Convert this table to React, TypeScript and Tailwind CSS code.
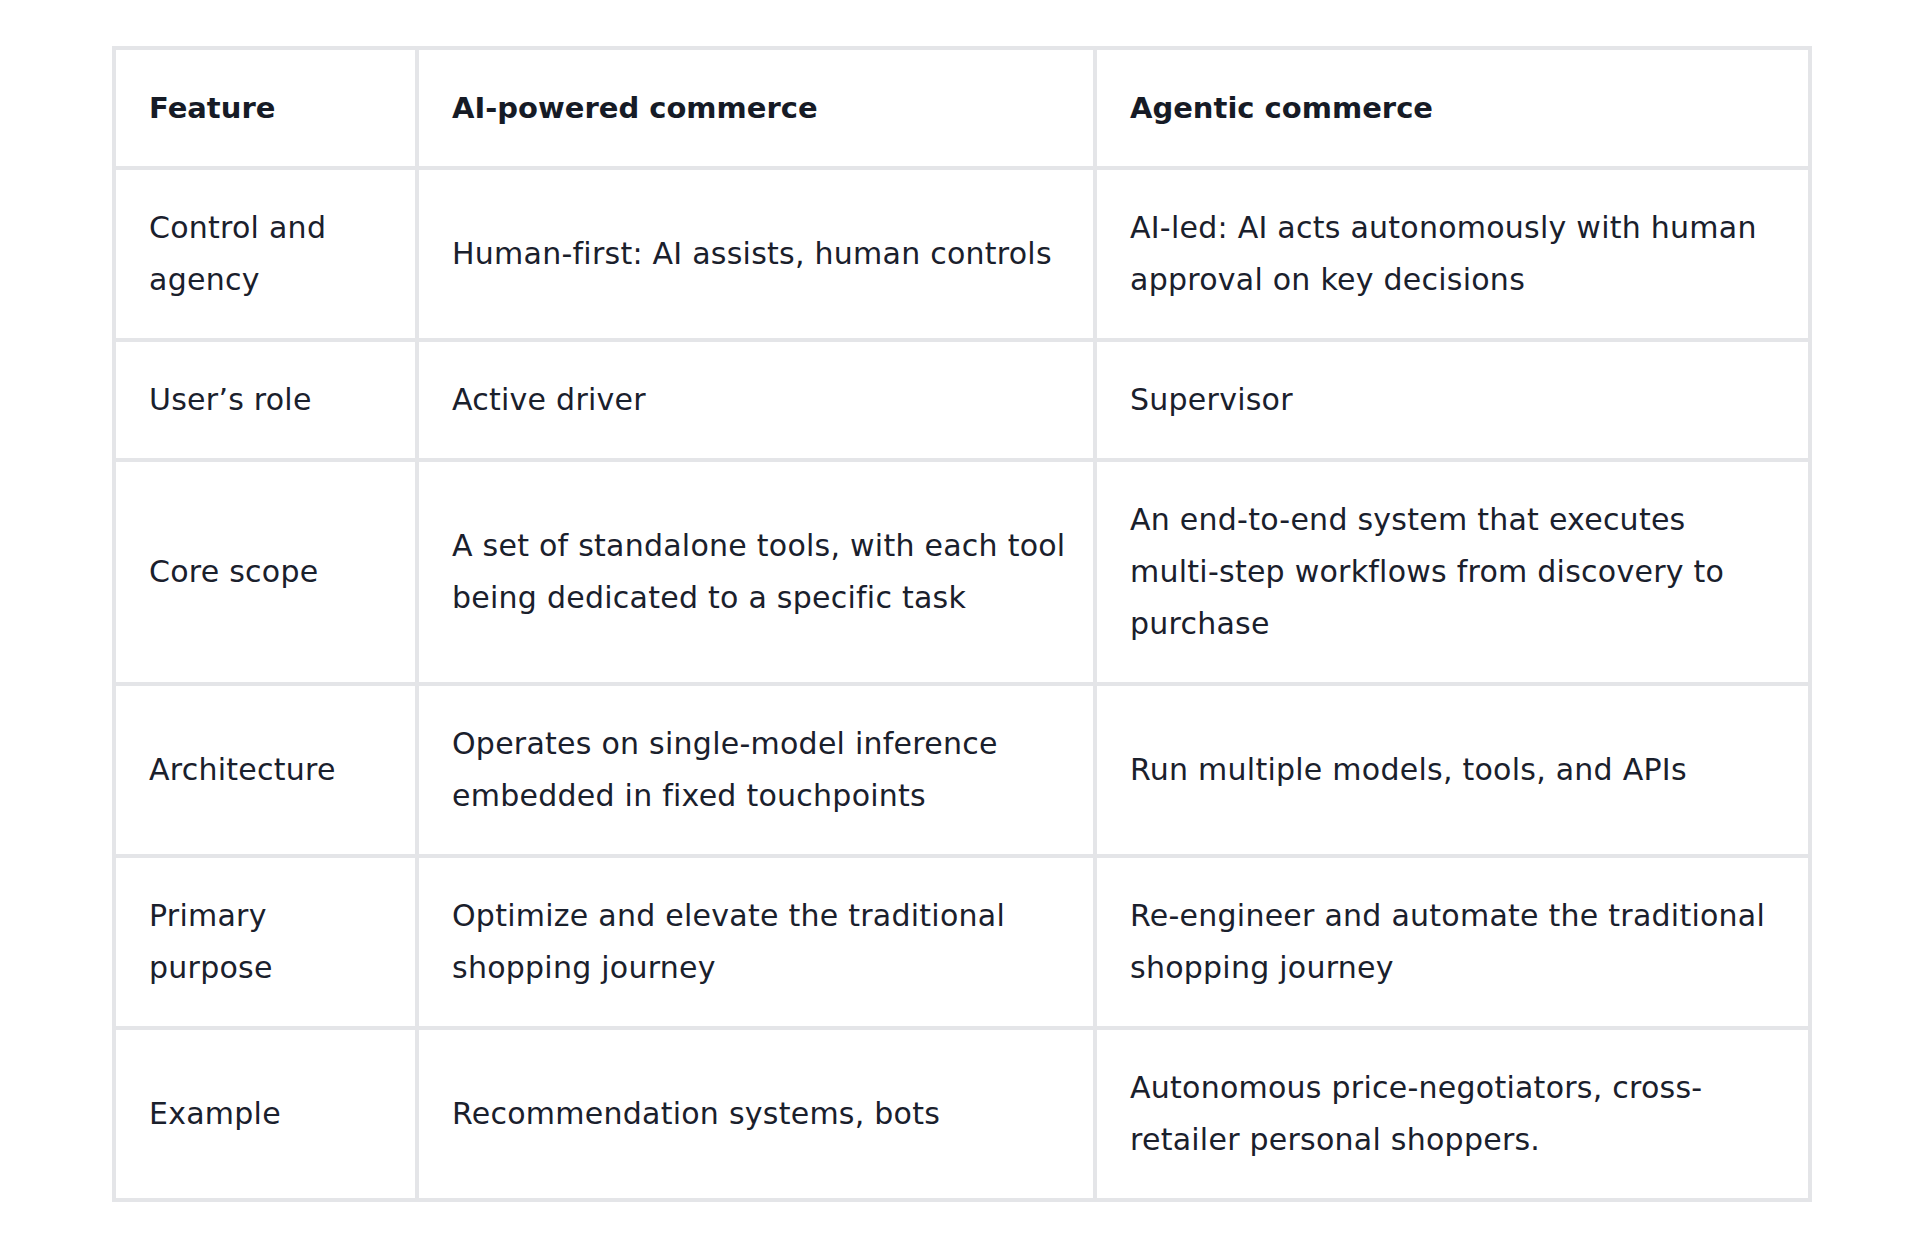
import React from "react";

type Row = { f: string[]; a: string[]; b: string[] };

const rows: Row[] = [
  {
    f: ["Control and", "agency"],
    a: ["Human-first: AI assists, human controls"],
    b: ["AI-led: AI acts autonomously with human", "approval on key decisions"],
  },
  { f: ["User’s role"], a: ["Active driver"], b: ["Supervisor"] },
  {
    f: ["Core scope"],
    a: ["A set of standalone tools, with each tool", "being dedicated to a specific task"],
    b: [
      "An end-to-end system that executes",
      "multi-step workflows from discovery to",
      "purchase",
    ],
  },
  {
    f: ["Architecture"],
    a: ["Operates on single-model inference", "embedded in fixed touchpoints"],
    b: ["Run multiple models, tools, and APIs"],
  },
  {
    f: ["Primary", "purpose"],
    a: ["Optimize and elevate the traditional", "shopping journey"],
    b: ["Re-engineer and automate the traditional", "shopping journey"],
  },
  {
    f: ["Example"],
    a: ["Recommendation systems, bots"],
    b: ["Autonomous price-negotiators, cross-", "retailer personal shoppers."],
  },
];

function Cell({ lines, head }: { lines: string[]; head?: boolean }) {
  return (
    <div className="bg-white flex items-center pl-[33px] pr-[16px] py-[32px]">
      <div
        className={
          head
            ? "text-[29px] leading-[52px] font-bold text-[#161b26] whitespace-nowrap"
            : "text-[30px] leading-[52px] tracking-[0.25px] text-[#1a202c] whitespace-nowrap"
        }
      >
        {lines.map((l, i) => (
          <div key={i}>{l}</div>
        ))}
      </div>
    </div>
  );
}

export default function App() {
  return (
    <div
      className="min-h-screen bg-white pt-[46px] pl-[112px]"
      style={{ fontFamily: '"DejaVu Sans", sans-serif' }}
    >
      <div className="grid grid-cols-[299px_674px_711px] gap-[4px] p-[4px] bg-[#e4e5e8] w-[1700px]">
        <Cell head lines={["Feature"]} />
        <Cell head lines={["AI-powered commerce"]} />
        <Cell head lines={["Agentic commerce"]} />
        {rows.map((r, i) => (
          <React.Fragment key={i}>
            <Cell lines={r.f} />
            <Cell lines={r.a} />
            <Cell lines={r.b} />
          </React.Fragment>
        ))}
      </div>
    </div>
  );
}
